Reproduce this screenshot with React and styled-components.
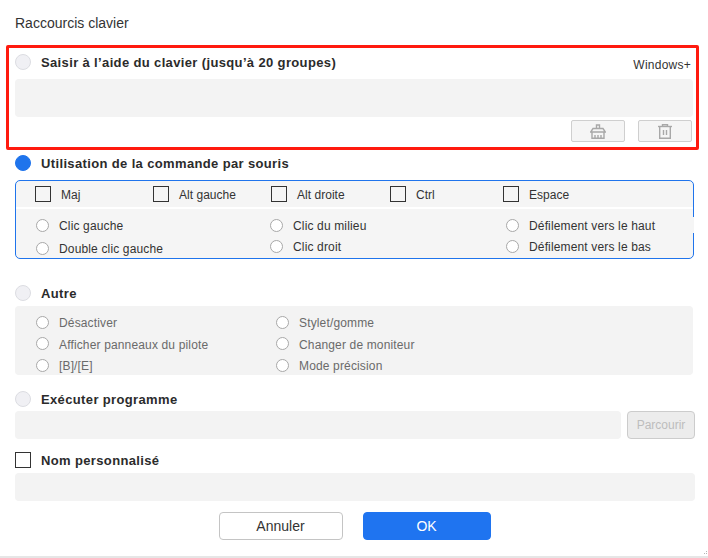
import React from "react"
import styled, { createGlobalStyle } from "styled-components"

const GlobalStyle = createGlobalStyle`
  html, body {
    margin: 0;
    padding: 0;
    background: #ffffff;
  }
  body {
    font-family: "Liberation Sans", Arial, sans-serif;
    font-size: 12px;
    letter-spacing: 0.15px;
    color: #333333;
  }
`

const Dialog = styled.div`
  position: relative;
  width: 708px;
  height: 558px;
  box-sizing: border-box;
  padding: 15px 13px 0 15px;
  border-bottom: 2px solid #e6e6e6;
  overflow: hidden;
`

const Title = styled.div`
  font-size: 14px;
  line-height: 16px;
  letter-spacing: 0;
  color: #333333;
  margin-bottom: 14px;
`

const Highlight = styled.section`
  margin: 0 -4px 0 -9px;
  height: 105px;
  box-sizing: border-box;
  padding: 5px 3px 0 6px;
  border: 3px solid #ff1a0f;
  border-radius: 2px;
`

const Header = styled.div`
  display: flex;
  align-items: center;
  height: 18px;
  margin-top: ${props => props.$top || 0}px;
`

const BigRadio = styled.span`
  width: 16px;
  height: 16px;
  box-sizing: border-box;
  border-radius: 50%;
  flex: none;
  margin-right: 10px;
  border: 1px solid ${props => (props.$on ? "#1f74ec" : "#dcdde2")};
  background: ${props => (props.$on ? "#1f74ec" : "#f0f0f4")};
`

const Heading = styled.span`
  font-size: 13px;
  font-weight: 700;
  letter-spacing: 0.36px;
  color: #2b2b2b;
`

const WindowsLabel = styled.span`
  margin-left: auto;
  padding: 5px 2px 0 0;
  font-size: 12px;
  letter-spacing: 0.25px;
  color: #333333;
`

const Field = styled.div`
  height: ${props => props.$h || 28}px;
  margin-top: ${props => props.$top || 0}px;
  background: #f3f3f3;
  border-radius: 4px;
  flex: ${props => (props.$grow ? 1 : "none")};
`

const ToolRow = styled.div`
  display: flex;
  justify-content: flex-end;
  gap: 13px;
  margin-top: 3px;
  padding-right: 1px;
`

const ToolButton = styled.button`
  width: 54px;
  height: 22px;
  padding: 0;
  display: flex;
  align-items: center;
  justify-content: center;
  background: #f5f5f5;
  border: 1px solid #cfcfcf;
  border-radius: 2px;
`

const MouseBox = styled.div`
  position: relative;
  width: 679px;
  height: 79px;
  box-sizing: border-box;
  margin-top: 8px;
  border: 1px solid #1f74ec;
  border-radius: 5px;
  background: #f5f5f5;

  &::after {
    content: "";
    position: absolute;
    top: 36px;
    right: -1px;
    width: 1px;
    height: 16px;
    background: #f5f5f5;
  }
`

const KeyRow = styled.div`
  display: grid;
  grid-template-columns: 118px 118px 119px 113px 1fr;
  align-items: center;
  height: 26px;
  padding-left: 19px;
  border-bottom: 2px solid #ffffff;
`

const Box = styled.span`
  width: 16px;
  height: 16px;
  box-sizing: border-box;
  flex: none;
  border: 1px solid #333333;
  margin-right: ${props => props.$right || 0}px;
`

const Check = styled.label`
  display: flex;
  align-items: center;
  gap: 10px;
  padding-top: 2px;
  letter-spacing: 0.03px;
  color: #333333;

  ${Box} {
    margin-top: -2px;
  }
`

const Choices = styled.div`
  display: flex;
  padding: ${props => props.$pad}px 0 0 ${props => props.$left}px;
`

const Column = styled.div`
  display: flex;
  flex-direction: column;
  width: ${props => props.$w}px;
  gap: ${props => props.$gap}px;
`

const SmallRadio = styled.span`
  width: 13px;
  height: 13px;
  box-sizing: border-box;
  margin-top: -2px;
  border: 1px solid #a8a8a8;
  border-radius: 50%;
  background: #ffffff;
  flex: none;
`

const Choice = styled.label`
  display: flex;
  align-items: center;
  height: 16px;
  box-sizing: border-box;
  gap: 10px;
  padding-top: 2px;
  color: ${props => (props.$muted ? "#6a6a6a" : "#333333")};
`

const OtherBox = styled.div`
  height: 69px;
  margin: 4px 2px 0 0;
  background: #f3f3f3;
  border-radius: 4px;
`

const FieldRow = styled.div`
  display: flex;
  gap: 6px;
  margin-top: 3px;
`

const Browse = styled.button`
  width: 68px;
  height: 28px;
  padding: 0;
  flex: none;
  background: #ececec;
  border: 1px solid #cccccc;
  border-radius: 4px;
  color: #bdbdbd;
  font: 12px "Liberation Sans", Arial, sans-serif;
`

const Footer = styled.div`
  display: flex;
  justify-content: center;
  gap: 20px;
  margin: 11px 0 0 -1px;
`

const FooterButton = styled.button`
  width: ${props => (props.$primary ? 128 : 124)}px;
  height: 28px;
  padding: 0;
  border-radius: 4px;
  font: 14px "Liberation Sans", Arial, sans-serif;
  border: 1px solid ${props => (props.$primary ? "#1f74f0" : "#c4c4c4")};
  background: ${props => (props.$primary ? "#1f74f0" : "#ffffff")};
  color: ${props => (props.$primary ? "#ffffff" : "#333333")};
`

const Grip = styled.svg`
  position: absolute;
  right: 0;
  bottom: 0;
`

const BasketIcon = () => (
  <svg width="16" height="15" viewBox="0 0 16 15" fill="none" stroke="#a8a8a8" strokeWidth="1.4">
    <path d="M6.5 4.5V1h3v3.5" />
    <path d="M3 4.5h10L15.3 8H.7z" />
    <path d="M2 8v6.3h12V8" />
    <path d="M5 11v3.3M8 11v3.3M11 11v3.3" />
  </svg>
)

const TrashIcon = () => (
  <svg width="14" height="15" viewBox="0 0 14 15" fill="none" stroke="#a8a8a8" strokeWidth="1.4">
    <path d="M0 2.5h14" />
    <path d="M4.5 2.5V.7h5v1.8" />
    <path d="M1.7 2.5v11.8h10.6V2.5" />
    <path d="M5.5 6v5M8.5 6v5" />
  </svg>
)

const keys = ["Maj", "Alt gauche", "Alt droite", "Ctrl", "Espace"]

const RadioColumn = ({ items, width, gap, muted }) => (
  <Column $w={width} $gap={gap}>
    {items.map(item => (
      <Choice key={item} $muted={muted}>
        <SmallRadio />
        {item}
      </Choice>
    ))}
  </Column>
)

export default function App() {
  return (
    <Dialog>
      <GlobalStyle />
      <Title>Raccourcis clavier</Title>

      <Highlight>
        <Header>
          <BigRadio />
          <Heading>Saisir à l’aide du clavier (jusqu’à 20 groupes)</Heading>
          <WindowsLabel>Windows+</WindowsLabel>
        </Header>
        <Field $h={38} $top={8} />
        <ToolRow>
          <ToolButton aria-label="Vider">
            <BasketIcon />
          </ToolButton>
          <ToolButton aria-label="Supprimer">
            <TrashIcon />
          </ToolButton>
        </ToolRow>
      </Highlight>

      <Header $top={4}>
        <BigRadio $on />
        <Heading>Utilisation de la commande par souris</Heading>
      </Header>
      <MouseBox>
        <KeyRow>
          {keys.map(key => (
            <Check key={key}>
              <Box />
              {key}
            </Check>
          ))}
        </KeyRow>
        <Choices $pad={8} $left={20}>
          <RadioColumn width={234} gap={7} items={["Clic gauche", "Double clic gauche"]} />
          <RadioColumn width={236} gap={5} items={["Clic du milieu", "Clic droit"]} />
          <RadioColumn width={180} gap={5} items={["Défilement vers le haut", "Défilement vers le bas"]} />
        </Choices>
      </MouseBox>

      <Header $top={25}>
        <BigRadio />
        <Heading>Autre</Heading>
      </Header>
      <OtherBox>
        <Choices $pad={8} $left={21}>
          <RadioColumn muted width={240} gap={5.5} items={["Désactiver", "Afficher panneaux du pilote", "[B]/[E]"]} />
          <RadioColumn muted width={240} gap={5.5} items={["Stylet/gomme", "Changer de moniteur", "Mode précision"]} />
        </Choices>
      </OtherBox>

      <Header $top={15}>
        <BigRadio />
        <Heading>Exécuter programme</Heading>
      </Header>
      <FieldRow>
        <Field $grow />
        <Browse disabled>Parcourir</Browse>
      </FieldRow>

      <Header $top={12}>
        <Box $right={10} />
        <Heading>Nom personnalisé</Heading>
      </Header>
      <Field $top={4} />

      <Footer>
        <FooterButton>Annuler</FooterButton>
        <FooterButton $primary>OK</FooterButton>
      </Footer>

      <Grip width="4" height="5" viewBox="0 0 4 5" fill="#b5b5b5">
        <rect x="2" y="0" width="1" height="1" />
        <rect x="0" y="2" width="1" height="1" />
        <rect x="2" y="2" width="1" height="1" />
      </Grip>
    </Dialog>
  )
}
